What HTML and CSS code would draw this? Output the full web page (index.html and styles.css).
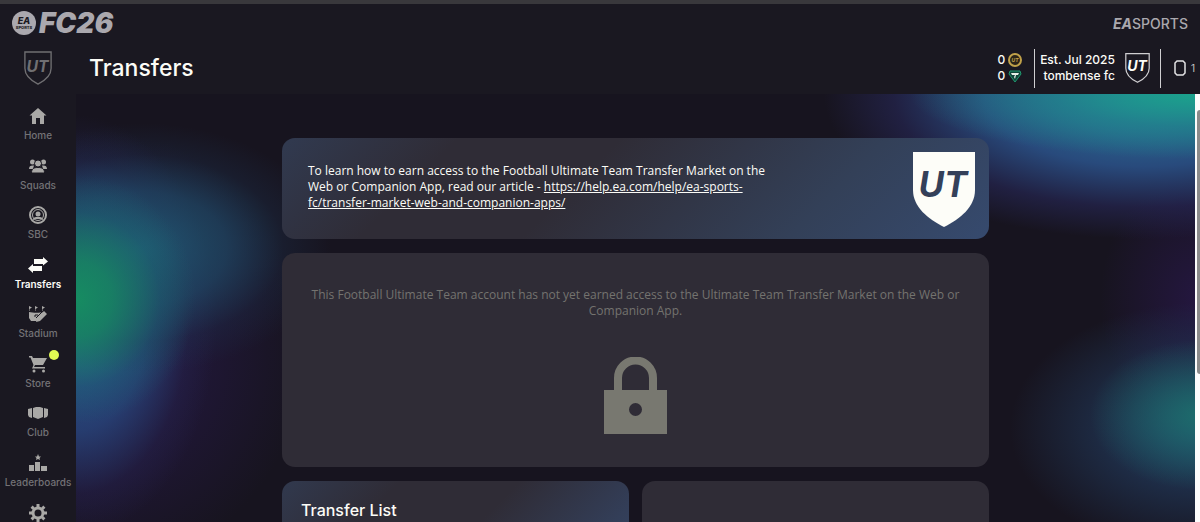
FILE: index.html
```html
<!DOCTYPE html>
<html lang="en">
<head>
    <meta charset="UTF-8">
    <meta name="viewport" content="width=device-width, initial-scale=1.0">
    <title>FC 26 Web App - Transfers</title>
    <link rel="stylesheet" href="styles.css">
</head>
<body>
    <!-- Top bar -->
    <header class="top-bar">
        <a href="#" class="brand">
            <svg class="ea-badge" viewBox="0 0 24 24">
                <circle cx="12" cy="12" r="12"/>
                <text class="badge-ea" x="12" y="13" text-anchor="middle">EA</text>
                <text class="badge-sports" x="12" y="18" text-anchor="middle">SPORTS</text>
            </svg>
            <span class="fc-logo">FC26</span>
        </a>
        <a href="#" class="ea-sports"><b>EA</b>SPORTS</a>
    </header>

    <div class="layout">
        <!-- Sidebar -->
        <aside class="sidebar">
            <svg class="crest" viewBox="0 0 62 75">
                <path d="M2 2H60V38C60 54 47 65 31 73C15 65 2 54 2 38Z"/>
                <text x="30" y="46" text-anchor="middle">UT</text>
            </svg>
            <nav class="nav">
                <a href="#" class="nav-item">
                    <svg viewBox="0 0 20 20"><path d="M10 2L1.500 9.500H4V18H8V12H12V18H16V9.500H18.500Z"/></svg>
                    <span>Home</span>
                </a>
                <a href="#" class="nav-item">
                    <svg viewBox="0 0 20 20">
                        <circle cx="4.500" cy="6" r="2.500"/><circle cx="15.500" cy="6" r="2.500"/>
                        <path d="M1 13C1 10 3 9 6 9.500L5 13ZM19 13C19 10 17 9 14 9.500L15 13Z"/>
                        <circle class="cutout" cx="10" cy="7.500" r="3.500"/>
                        <path class="cutout" d="M3.500 17C3.500 12.500 6 11.500 10 11.500S16.500 12.500 16.500 17Z"/>
                    </svg>
                    <span>Squads</span>
                </a>
                <a href="#" class="nav-item">
                    <svg viewBox="0 0 20 20">
                        <circle class="ring" cx="10" cy="10" r="8"/>
                        <circle class="thin-ring" cx="10" cy="10" r="5.500"/>
                        <circle cx="10" cy="9" r="2.500"/><path d="M5 15C5 12 7 12 10 12S15 12 15 15L12 14H8Z"/>
                    </svg>
                    <span>SBC</span>
                </a>
                <a href="#" class="nav-item active">
                    <svg viewBox="0 0 20 20"><path d="M6 4H15V2L20 6.500L15 10.500V9H6ZM14 11H5V9L0 13.500L5 18V16H14Z"/></svg>
                    <span>Transfers</span>
                </a>
                <a href="#" class="nav-item">
                    <svg viewBox="0 0 20 20">
                        <path d="M1 2L4 3.500L1.500 5V7H1ZM7 2L10 3.500L7.500 5V7H7ZM14 2L17 3.500L14.500 5V7H14Z"/>
                        <path d="M1 8C5 9 12 9 16 8L11 13L8 17H3L1 14ZM9 14L16 7L19 10L12 17L8 18Z"/>
                        <path class="line" d="M7 13V11H10M8 14L15 7"/>
                    </svg>
                    <span>Stadium</span>
                </a>
                <a href="#" class="nav-item">
                    <svg viewBox="0 0 20 20">
                        <path d="M1 2H4L5 4H19L15 11H7L6 13H17V14.500H4L5.500 11L2.500 3.500H1Z"/>
                        <circle cx="6" cy="17" r="1.500"/><circle cx="15.500" cy="17" r="1.500"/>
                    </svg>
                    <span>Store</span>
                    <i class="badge"></i>
                </a>
                <a href="#" class="nav-item">
                    <svg viewBox="0 0 20 20"><path d="M5 5L8 4H12L15 5V14L10 16L5 14ZM0 6L4 5V15L1 14L0 12ZM20 6L16 5V15L19 14L20 12Z"/></svg>
                    <span>Club</span>
                </a>
                <a href="#" class="nav-item">
                    <svg viewBox="0 0 20 20"><path d="M7 9H12V18H7ZM1 12H6V18H1ZM13 13H19V18H13ZM10 1L11 3.500H13L11.500 5L12 7L10 6L8 7L8.500 5L7 3.500H9Z"/></svg>
                    <span>Leaderboards</span>
                </a>
                <a href="#" class="nav-item" aria-label="Settings">
                    <svg viewBox="0 0 20 20">
                        <circle class="gear" cx="10" cy="10" r="5"/>
                        <path class="teeth" d="M10 1V4M10 16V19M1 10H4M16 10H19M3.600 3.600L6 6M14 14L16.400 16.400M3.600 16.400L6 14M14 6L16.400 3.600"/>
                    </svg>
                </a>
            </nav>
        </aside>

        <main class="main">
            <!-- Title and club info -->
            <div class="title-bar">
                <h1>Transfers</h1>
                <div class="currencies">
                    <div class="currency">0
                        <svg viewBox="0 0 14 14"><circle class="coin" cx="7" cy="7" r="6"/><text class="coin-text" x="7" y="9" text-anchor="middle">UT</text></svg>
                    </div>
                    <div class="currency">0
                        <svg viewBox="0 0 14 14"><path class="points" d="M2 2H12L13 5L7 13L1 5Z"/><path class="points-mark" d="M3 4H11L10 6H8L7 10L6 8L7 6H4Z"/></svg>
                    </div>
                </div>
                <div class="club">
                    <div class="club-info">
                        <div>Est. Jul 2025</div>
                        <div>tombense fc</div>
                    </div>
                    <svg class="club-crest" viewBox="0 0 62 75">
                        <path d="M2 2H60V38C60 54 47 65 31 73C15 65 2 54 2 38Z"/>
                        <text x="30" y="46" text-anchor="middle">UT</text>
                    </svg>
                </div>
                <div class="squad-count">
                    <svg viewBox="0 0 14 18"><path d="M4 2H10L12 4V14L10 16H4L2 14V4Z"/></svg>
                    <span>1</span>
                </div>
            </div>

            <div class="view">
                <div class="content">
                    <section class="card info-card">
                        <p>To learn how to earn access to the Football Ultimate Team Transfer Market on the Web or Companion App, read our article - <a href="https://help.ea.com/help/ea-sports-fc/transfer-market-web-and-companion-apps/">https://help.ea.com/help/ea-sports-fc/transfer-market-web-and-companion-apps/</a></p>
                        <svg class="info-crest" viewBox="0 0 62 75">
                            <path d="M0 0H62V38C62 55 47 67 31 75C15 67 0 55 0 38Z"/>
                            <text x="30" y="45" text-anchor="middle">UT</text>
                        </svg>
                    </section>

                    <section class="card locked-card">
                        <p>This Football Ultimate Team account has not yet earned access to the Ultimate Team Transfer Market on the Web or Companion App.</p>
                        <svg class="lock" viewBox="0 0 63 77">
                            <path class="shackle" d="M14 34V21A17.500 17.500 0 0 1 49 21V34"/>
                            <path fill-rule="evenodd" d="M0 33H63V77H0ZM31.500 46A6.500 6.500 0 1 0 31.500 59A6.500 6.500 0 1 0 31.500 46Z"/>
                        </svg>
                    </section>

                    <div class="tiles">
                        <section class="card tile tile-list">
                            <h2>Transfer List</h2>
                        </section>
                        <section class="card tile"></section>
                    </div>
                </div>
                <div class="scrollbar"><div class="thumb"></div></div>
            </div>
        </main>
    </div>
</body>
</html>
```
FILE: styles.css
```css
* {
    margin: 0;
    padding: 0;
    box-sizing: border-box;
}

body {
    font-family: Inter, sans-serif;
    background-color: #1a1821;
    color: #fcfcf7;
    height: 100vh;
    overflow: hidden;
    display: flex;
    flex-direction: column;
    border-top: 4px solid #39383c;
}

a {
    color: inherit;
    text-decoration: none;
}

/* Top bar */
.top-bar {
    display: flex;
    align-items: center;
    justify-content: space-between;
    height: 38px;
    flex-shrink: 0;
    padding: 0 12px;
    color: #aaa8ae;
}

.brand {
    display: flex;
    align-items: center;
    gap: 3px;
}

.ea-badge {
    width: 24px;
    height: 24px;
    fill: #aaa8ae;
}

.ea-badge text {
    fill: #1a1821;
    font-weight: 800;
}

.badge-ea {
    font-size: 9px;
    font-style: italic;
}

.badge-sports {
    font-size: 4px;
}

.fc-logo {
    font-size: 28px;
    line-height: 28px;
    font-weight: 900;
    font-style: italic;
}

.ea-sports {
    font-size: 14px;
    font-weight: 500;
}

.ea-sports b {
    font-weight: 700;
    font-style: italic;
}

.layout {
    flex: 1;
    min-height: 0;
    display: flex;
}

/* Sidebar */
.sidebar {
    width: 76px;
    flex-shrink: 0;
    display: flex;
    flex-direction: column;
    align-items: center;
    padding-top: 8px;
    overflow: hidden;
}

.crest {
    width: 28px;
    height: 36px;
    flex-shrink: 0;
    fill: none;
    stroke: #706f72;
    stroke-width: 3;
}

.crest text {
    fill: #706f72;
    stroke: none;
}

.crest text,
.club-crest text,
.info-crest text {
    font-size: 35px;
    font-weight: 700;
    font-style: italic;
}

.nav {
    flex: 1;
    width: 100%;
    margin-top: 20px;
    margin-bottom: -30px;
    display: flex;
    flex-direction: column;
}

.nav-item {
    flex: 1;
    position: relative;
    display: flex;
    flex-direction: column;
    align-items: center;
    font-size: 10px;
    line-height: 16px;
    font-weight: 500;
    color: #737276;
}

.nav-item svg {
    width: 20px;
    height: 20px;
    margin-bottom: 1px;
    flex-shrink: 0;
    fill: #a9a8a6;
}

.nav-item.active {
    color: #fcfcf7;
    font-weight: 600;
}

.nav-item.active svg {
    fill: #fcfcf7;
}

.nav-item .cutout {
    stroke: #1a1821;
}

.nav-item .ring,
.nav-item .thin-ring,
.nav-item .gear,
.nav-item .teeth {
    fill: none;
    stroke: #a9a8a6;
    stroke-width: 2;
}

.nav-item .thin-ring {
    stroke-width: 1;
}

.nav-item .gear,
.nav-item .teeth {
    stroke-width: 3;
}

.nav-item .line {
    fill: none;
    stroke: #1a1821;
}

.badge {
    position: absolute;
    top: -4px;
    right: 17px;
    width: 10px;
    height: 10px;
    border-radius: 50%;
    background-color: #e2fa53;
}

/* Title bar */
.main {
    flex: 1;
    min-width: 0;
    display: flex;
    flex-direction: column;
}

.title-bar {
    display: flex;
    align-items: center;
    height: 52px;
    flex-shrink: 0;
    padding: 0 5px 0 13px;
}

.title-bar h1 {
    font-size: 23px;
    font-weight: 500;
    margin-right: auto;
}

.currencies,
.club-info {
    font-size: 12px;
    line-height: 16px;
    font-weight: 500;
    text-align: right;
}

.currency {
    display: flex;
    align-items: center;
    gap: 3px;
}

.currency svg {
    width: 14px;
    height: 14px;
}

.coin {
    fill: #2c2418;
    stroke: #c0a14a;
    stroke-width: 2;
}

.coin-text {
    font-size: 5px;
    font-weight: 700;
    font-style: italic;
    fill: #c0a14a;
}

.points {
    fill: #10463a;
    stroke: #209a70;
}

.points-mark {
    fill: #e8f0e8;
}

.club {
    display: flex;
    align-items: center;
    gap: 10px;
    height: 39px;
    margin-left: 12px;
    padding: 0 10px 0 5px;
    border-left: 1px solid #d0cfd2;
    border-right: 1px solid #d0cfd2;
}

.club-crest {
    width: 25px;
    height: 32px;
    fill: none;
    stroke: #d0cfd2;
    stroke-width: 3;
}

.club-crest text {
    fill: #fcfcf7;
    stroke: none;
}

.squad-count {
    display: flex;
    align-items: center;
    gap: 4px;
    margin-left: 12px;
    font-size: 10px;
    color: #c4c3c6;
}

.squad-count svg {
    width: 14px;
    height: 18px;
    fill: none;
    stroke: #e4e3e5;
    stroke-width: 1.500;
}

/* Page view */
.view {
    flex: 1;
    min-height: 0;
    display: flex;
    overflow: hidden;
    background:
        radial-gradient(ellipse 120px 125px at 0 48%, #168c61 0%, rgba(22, 138, 97, 0.8) 30%, rgba(24, 110, 110, 0.3) 70%, rgba(24, 110, 110, 0) 100%),
        radial-gradient(ellipse 190px 125px at 65px 36%, rgba(32, 90, 116, 0.9) 0%, rgba(32, 74, 104, 0.7) 45%, rgba(30, 50, 80, 0.3) 75%, rgba(30, 40, 70, 0) 100%),
        radial-gradient(ellipse 140px 210px at 0 54%, #285a90 0%, rgba(40, 70, 125, 0.8) 50%, rgba(40, 40, 90, 0.3) 80%, rgba(40, 36, 86, 0) 100%),
        radial-gradient(ellipse 210px 220px at 20px 60%, rgba(40, 28, 78, 0.8) 0%, rgba(36, 24, 66, 0.5) 60%, rgba(36, 24, 66, 0) 100%),
        radial-gradient(ellipse 290px 65px at 100% 0, #1ba38c 0%, rgba(32, 135, 140, 0.7) 50%, rgba(36, 100, 135, 0) 100%),
        radial-gradient(ellipse 320px 145px at 95% 0, #2880a0 0%, rgba(42, 80, 134, 0.9) 50%, rgba(42, 44, 100, 0.5) 78%, rgba(40, 30, 84, 0) 100%),
        radial-gradient(ellipse 110px 75px at 100% 75%, rgba(28, 112, 108, 0.9) 0%, rgba(30, 90, 110, 0) 100%),
        radial-gradient(ellipse 190px 125px at 100% 78%, rgba(36, 76, 118, 0.9) 0%, rgba(34, 60, 95, 0.6) 50%, rgba(34, 50, 90, 0) 100%),
        radial-gradient(ellipse 100px 130px at 100% 48%, rgba(42, 24, 78, 0.7) 0%, rgba(42, 24, 78, 0) 100%),
        #17141f;
}

.content {
    flex: 1;
    max-width: 707px;
    margin: 44px auto 0;
    display: flex;
    flex-direction: column;
    gap: 14px;
}

.card {
    border-radius: 13px;
    background-color: #2f2c36;
    flex-shrink: 0;
}

.card p {
    font-family: "Open Sans", sans-serif;
    font-size: 12px;
    line-height: 16px;
    font-weight: 500;
}

.info-card {
    display: flex;
    justify-content: space-between;
    align-items: flex-start;
    padding: 14px 14px 12px 26px;
    background: linear-gradient(135deg, #313a50 0%, #2f2c36 22%, #2f2c36 42%, #334058 75%, #364a6e 100%);
}

.info-card p {
    max-width: 460px;
    padding-top: 11px;
}

.info-card a {
    text-decoration: underline;
}

.info-crest {
    width: 62px;
    height: 75px;
    flex-shrink: 0;
    fill: #fdfdf8;
}

.info-crest text {
    fill: #344059;
}

.locked-card {
    display: flex;
    flex-direction: column;
    align-items: center;
    gap: 38px;
    padding: 34px 26px 33px;
    text-align: center;
    color: #74736f;
}

.lock {
    width: 63px;
    height: 77px;
    fill: #787870;
}

.lock .shackle {
    fill: none;
    stroke: #787870;
    stroke-width: 8;
}

/* Tiles */
.tiles {
    display: grid;
    grid-template-columns: 1fr 1fr;
    gap: 13px;
}

.tile {
    min-height: 150px;
    padding: 19px;
}

.tile-list {
    background: linear-gradient(135deg, #31394e 0%, #2f2c36 24%, #2f2c36 48%, #333e58 75%, #364a6e 100%);
}

.tile h2 {
    font-size: 16px;
    line-height: 20px;
    font-weight: 500;
}

/* Scrollbar */
.scrollbar {
    width: 5px;
    padding-top: 16px;
    background-color: #fcfcfc;
}

.thumb {
    width: 3px;
    height: 64%;
    margin-left: 2px;
    border-radius: 3px 0 0 3px;
    background-color: #8b8b8b;
}
```
